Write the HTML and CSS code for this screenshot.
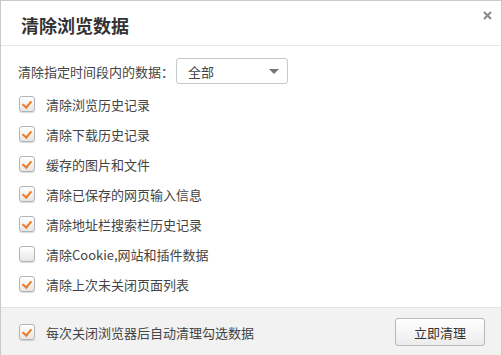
FILE: index.html
```html
<!DOCTYPE html>
<html lang="zh-CN">
<head>
<meta charset="UTF-8">
<title>清除浏览数据</title>
<link rel="stylesheet" href="styles.css">
</head>
<body>

<div class="dialog">
  <div class="dialog-head">
    <h1>清除浏览数据</h1>
    <svg class="close" width="9" height="9" viewBox="0 0 9 9">
      <path d="M1 1 L8 8 M8 1 L1 8" stroke="#888" stroke-width="2"/>
    </svg>
  </div>

  <div class="dialog-body">
    <div class="range">
      <span>清除指定时间段内的数据：</span>
      <div class="select">
        <span>全部</span>
        <span class="arrow"></span>
      </div>
    </div>

    <label class="item"><span class="box checked"></span>清除浏览历史记录</label>
    <label class="item"><span class="box checked"></span>清除下载历史记录</label>
    <label class="item"><span class="box checked"></span>缓存的图片和文件</label>
    <label class="item"><span class="box checked"></span>清除已保存的网页输入信息</label>
    <label class="item"><span class="box checked"></span>清除地址栏搜索栏历史记录</label>
    <label class="item"><span class="box"></span>清除Cookie,网站和插件数据</label>
    <label class="item"><span class="box checked"></span>清除上次未关闭页面列表</label>
  </div>

  <div class="dialog-foot">
    <label class="item"><span class="box checked"></span>每次关闭浏览器后自动清理勾选数据</label>
    <button class="clear-btn">立即清理</button>
  </div>
</div>

</body>
</html>
```

FILE: styles.css
```css
* {
  box-sizing: border-box;
}
body {
  margin: 0;
  background: #fff;
  font-family: "Noto Sans CJK SC", "Noto Sans", sans-serif;
  color: #444;
  font-size: 13px;
}
.dialog {
  width: 502px;
  height: 355px;
  border: 1px solid #c9c9c9;
  border-bottom: none;
  overflow: hidden;
}
.dialog-head {
  height: 45px;
  border-bottom: 1px solid #e6e6e6;
  display: flex;
  justify-content: space-between;
  align-items: flex-start;
  padding: 0 9px 0 20px;
}
.dialog-head h1 {
  margin: 0;
  font-size: 18px;
  font-weight: bold;
  color: #333;
  line-height: 48px;
}
.close {
  margin-top: 10px;
}
.dialog-body {
  padding: 12px 17px 8px;
  border-bottom: 1px solid #e2e2e2;
}
.range {
  display: flex;
  align-items: center;
  height: 26px;
  margin-bottom: 5px;
}
.select {
  width: 112px;
  height: 26px;
  margin-left: 2px;
  border: 1px solid #c8c8c8;
  border-radius: 3px;
  display: flex;
  justify-content: space-between;
  align-items: center;
  padding: 0 8px 0 11px;
}
.arrow {
  width: 0;
  height: 0;
  border-left: 5px solid transparent;
  border-right: 5px solid transparent;
  border-top: 5px solid #777;
}
.item {
  display: flex;
  align-items: center;
  height: 30px;
  padding-left: 1px;
}
.box {
  width: 16px;
  height: 16px;
  margin-right: 11px;
  border: 1px solid #b4b4b4;
  border-radius: 3px;
  background: linear-gradient(#ffffff, #e6e6e6);
  box-shadow: 0 1px 1px rgba(0, 0, 0, 0.15);
  position: relative;
}
.box.checked::after {
  content: "";
  position: absolute;
  left: 4px;
  top: 2px;
  width: 4px;
  height: 7px;
  border-right: 2px solid #f07b22;
  border-bottom: 2px solid #f07b22;
  transform: rotate(40deg);
}
.dialog-foot {
  background: #f2f2f2;
  height: 60px;
  display: flex;
  justify-content: space-between;
  align-items: flex-start;
  padding: 10px 16px 0 18px;
}
.dialog-foot .item {
  height: 28px;
  padding-left: 0;
}
.clear-btn {
  width: 90px;
  height: 28px;
  border: 1px solid #b9b9b9;
  border-radius: 3px;
  background: linear-gradient(#ffffff, #ececec);
  font-family: inherit;
  font-size: 13px;
  color: #333;
  padding: 0;
}
```
